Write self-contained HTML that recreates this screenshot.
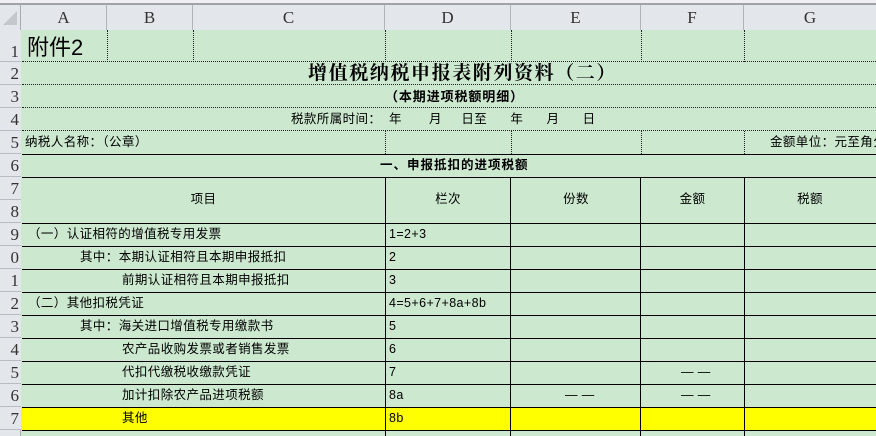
<!DOCTYPE html>
<html style="overflow:hidden;width:876px;height:436px"><head><meta charset="utf-8"><style>
*{margin:0;padding:0;box-sizing:border-box}
html,body{overflow:hidden}
body{width:876px;height:436px;overflow:hidden;background:#cce8cf;position:relative;font-family:"Liberation Sans","Noto Sans CJK SC",sans-serif;font-size:12.5px;letter-spacing:0.4px;color:#000}
.a{position:absolute}
.hd{background:#e3e6ea;color:#333;font-family:"Liberation Serif","Noto Serif CJK SC",serif;font-size:17px;text-align:center;line-height:25px;letter-spacing:0}
.rn{background:#e3e6ea;color:#333;font-family:"Liberation Serif",serif;font-size:17px;line-height:23px;text-align:right;padding-right:2px;overflow:hidden;border-bottom:1px solid #b8bcc0;letter-spacing:0}
.hl{height:1px;background:#000}
.vl{width:1px;background:#000}
.dh{height:0;border-top:1px dotted #222}
.dv{width:0;border-left:1px dotted #222}
.t{white-space:nowrap;line-height:23px}
</style></head><body>
<div class="a" style="left:0;top:0;width:876px;height:3px;background:#eef0f2"></div>
<div class="a" style="left:0;top:3px;width:876px;height:2px;background:#a0a4a8"></div>
<div class="a hd" style="left:0;top:5px;width:876px;height:25px;border-bottom:1px solid #a8acb0"></div>
<div class="a" style="left:0;top:5px;width:21px;height:25px;background:#e3e6ea;border-right:1px solid #a8acb0"></div>
<svg class="a" style="left:2px;top:10px" width="16" height="16"><polygon points="15,1 15,15 1,15" fill="#c4c8cc"/></svg>
<div class="a hd" style="left:21px;top:5px;width:86px;border-right:1px solid #b0b4b8">A</div>
<div class="a hd" style="left:107px;top:5px;width:86px;border-right:1px solid #b0b4b8">B</div>
<div class="a hd" style="left:193px;top:5px;width:192px;border-right:1px solid #b0b4b8">C</div>
<div class="a hd" style="left:385px;top:5px;width:126px;border-right:1px solid #b0b4b8">D</div>
<div class="a hd" style="left:511px;top:5px;width:130px;border-right:1px solid #b0b4b8">E</div>
<div class="a hd" style="left:641px;top:5px;width:103px;border-right:1px solid #b0b4b8">F</div>
<div class="a hd" style="left:744px;top:5px;width:132px">G</div>
<div class="a" style="left:0;top:30px;width:21px;height:406px;background:#e3e6ea;border-right:1px solid #a8acb0"></div>
<div class="a rn" style="left:0;top:30px;width:21px;height:32px;line-height:44px">1</div>
<div class="a rn" style="left:0;top:62px;width:21px;height:23px">2</div>
<div class="a rn" style="left:0;top:85px;width:21px;height:23px">3</div>
<div class="a rn" style="left:0;top:108px;width:21px;height:23px">4</div>
<div class="a rn" style="left:0;top:131px;width:21px;height:23px">5</div>
<div class="a rn" style="left:0;top:154px;width:21px;height:23px">6</div>
<div class="a rn" style="left:0;top:177px;width:21px;height:23px">7</div>
<div class="a rn" style="left:0;top:200px;width:21px;height:23px">8</div>
<div class="a rn" style="left:0;top:223px;width:21px;height:23px">9</div>
<div class="a rn" style="left:0;top:246px;width:21px;height:23px">0</div>
<div class="a rn" style="left:0;top:269px;width:21px;height:23px">1</div>
<div class="a rn" style="left:0;top:292px;width:21px;height:23px">2</div>
<div class="a rn" style="left:0;top:315px;width:21px;height:23px">3</div>
<div class="a rn" style="left:0;top:338px;width:21px;height:23px">4</div>
<div class="a rn" style="left:0;top:361px;width:21px;height:23px">5</div>
<div class="a rn" style="left:0;top:384px;width:21px;height:23px">6</div>
<div class="a rn" style="left:0;top:407px;width:21px;height:23px">7</div>
<div class="a" style="left:22px;top:407px;width:854px;height:23px;background:#ffff00"></div>
<div class="a dh" style="left:22px;top:61px;width:854px"></div>
<div class="a dh" style="left:22px;top:84px;width:854px"></div>
<div class="a dh" style="left:22px;top:107px;width:854px"></div>
<div class="a dh" style="left:22px;top:130px;width:854px"></div>
<div class="a dv" style="left:107px;top:30px;height:32px"></div>
<div class="a dv" style="left:193px;top:30px;height:32px"></div>
<div class="a dv" style="left:385px;top:30px;height:32px"></div>
<div class="a dv" style="left:511px;top:30px;height:32px"></div>
<div class="a dv" style="left:641px;top:30px;height:32px"></div>
<div class="a dv" style="left:744px;top:30px;height:32px"></div>
<div class="a dv" style="left:385px;top:131px;height:23px"></div>
<div class="a dv" style="left:511px;top:131px;height:23px"></div>
<div class="a dv" style="left:641px;top:131px;height:23px"></div>
<div class="a dv" style="left:744px;top:131px;height:23px"></div>
<div class="a hl" style="left:22px;top:154px;width:854px"></div>
<div class="a hl" style="left:22px;top:177px;width:854px"></div>
<div class="a hl" style="left:22px;top:223px;width:854px"></div>
<div class="a hl" style="left:22px;top:246px;width:854px"></div>
<div class="a hl" style="left:22px;top:269px;width:854px"></div>
<div class="a hl" style="left:22px;top:292px;width:854px"></div>
<div class="a hl" style="left:22px;top:315px;width:854px"></div>
<div class="a hl" style="left:22px;top:338px;width:854px"></div>
<div class="a hl" style="left:22px;top:361px;width:854px"></div>
<div class="a hl" style="left:22px;top:384px;width:854px"></div>
<div class="a hl" style="left:22px;top:407px;width:854px"></div>
<div class="a hl" style="left:22px;top:430px;width:854px"></div>
<div class="a vl" style="left:385px;top:177px;height:259px"></div>
<div class="a vl" style="left:510px;top:177px;height:259px"></div>
<div class="a vl" style="left:640px;top:177px;height:259px"></div>
<div class="a vl" style="left:744px;top:177px;height:259px"></div>
<div class="a t" style="left:27px;top:33px;font-size:22px;line-height:30px;letter-spacing:0">附件2</div>
<div class="a t" style="left:308px;top:62px;font-family:'Liberation Serif','Noto Serif CJK SC',serif;font-weight:bold;font-size:19px;letter-spacing:1.6px">增值税纳税申报表附列资料（二）</div>
<div class="a t" style="left:385px;top:85px;font-weight:bold;font-size:13px;letter-spacing:0.9px">（本期进项税额明细）</div>
<div class="a t" style="left:291px;top:108px">税款所属时间：&nbsp;&nbsp;年&nbsp;&nbsp;&nbsp;&nbsp;&nbsp;&nbsp;&nbsp;月&nbsp;&nbsp;&nbsp;&nbsp;&nbsp;日至&nbsp;&nbsp;&nbsp;&nbsp;&nbsp;&nbsp;年&nbsp;&nbsp;&nbsp;&nbsp;&nbsp;&nbsp;月&nbsp;&nbsp;&nbsp;&nbsp;&nbsp;&nbsp;日</div>
<div class="a t" style="left:25px;top:131px">纳税人名称：（公章）</div>
<div class="a t" style="left:770px;top:131px">金额单位：元至角分</div>
<div class="a t" style="left:380px;top:154px;font-weight:bold;letter-spacing:1px">一、申报抵扣的进项税额</div>
<div class="a t" style="left:22px;top:188px;width:363px;text-align:center">项目</div>
<div class="a t" style="left:385px;top:188px;width:126px;text-align:center">栏次</div>
<div class="a t" style="left:511px;top:188px;width:130px;text-align:center">份数</div>
<div class="a t" style="left:641px;top:188px;width:103px;text-align:center">金额</div>
<div class="a t" style="left:744px;top:188px;width:132px;text-align:center">税额</div>
<div class="a t" style="left:28px;top:223px">（一）认证相符的增值税专用发票</div>
<div class="a t" style="left:80px;top:246px">其中：本期认证相符且本期申报抵扣</div>
<div class="a t" style="left:122px;top:269px">前期认证相符且本期申报抵扣</div>
<div class="a t" style="left:28px;top:292px">（二）其他扣税凭证</div>
<div class="a t" style="left:80px;top:315px">其中：海关进口增值税专用缴款书</div>
<div class="a t" style="left:122px;top:338px">农产品收购发票或者销售发票</div>
<div class="a t" style="left:122px;top:361px">代扣代缴税收缴款凭证</div>
<div class="a t" style="left:122px;top:384px">加计扣除农产品进项税额</div>
<div class="a t" style="left:122px;top:407px">其他</div>
<div class="a t" style="left:389px;top:223px">1=2+3</div>
<div class="a t" style="left:389px;top:246px">2</div>
<div class="a t" style="left:389px;top:269px">3</div>
<div class="a t" style="left:389px;top:292px">4=5+6+7+8a+8b</div>
<div class="a t" style="left:389px;top:315px">5</div>
<div class="a t" style="left:389px;top:338px">6</div>
<div class="a t" style="left:389px;top:361px">7</div>
<div class="a t" style="left:389px;top:384px">8a</div>
<div class="a t" style="left:389px;top:407px">8b</div>
<div class="a t" style="left:681px;top:361px">— —</div>
<div class="a t" style="left:681px;top:384px">— —</div>
<div class="a t" style="left:565px;top:384px">— —</div>
</body></html>
